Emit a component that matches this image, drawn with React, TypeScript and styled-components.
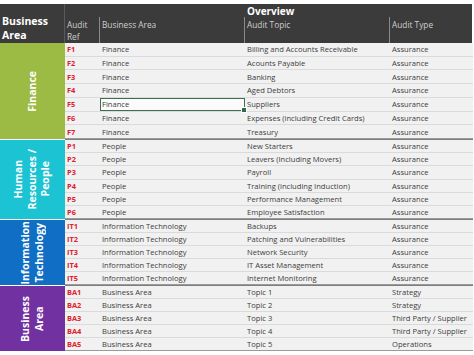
import React from "react";
import styled, { createGlobalStyle } from "styled-components";

const GlobalStyle = createGlobalStyle`
  html, body { margin: 0; padding: 0; background: #ffffff; }
  body { font-family: "Open Sans", "Noto Sans", sans-serif; }
  * { box-sizing: border-box; }
`;

const COLS = "35px 145px 145px 1fr";

const Page = styled.div`
  width: 474px;
  height: 355px;
  padding-top: 4px;
  overflow: hidden;
`;

const Sheet = styled.div`
  width: 473px;
  display: flex;
  flex-direction: column;
`;

const Header = styled.div`
  display: grid;
  grid-template-columns: 65px 1fr;
  height: 39px;
  background: #3b3b3b;
  margin-right: 1px;
`;

const CornerLabel = styled.div`
  border-right: 1px solid #5a5a5a;
  color: #ffffff;
  font-weight: 700;
  font-size: 10.5px;
  line-height: 14px;
  padding: 10px 0 0 2px;
`;

const HeaderRight = styled.div`
  display: grid;
  grid-template-rows: 13px 1fr;
`;

const TitleRow = styled.div`
  display: grid;
  grid-template-columns: ${COLS};
`;

const Title = styled.div`
  grid-column: 3;
  color: #ffffff;
  font-weight: 700;
  font-size: 10px;
  line-height: 13px;
  padding: 1px 0 0 2px;
`;

const LabelRow = styled.div`
  display: grid;
  grid-template-columns: ${COLS};
`;

const ColLabel = styled.div<{ $divider?: boolean }>`
  color: #cfcfcf;
  font-size: 8.3px;
  line-height: 12px;
  padding: 2px 0 0 2px;
  border-left: ${(p) => (p.$divider ? "1px solid #8a8a8a" : "none")};
  margin-left: ${(p) => (p.$divider ? "-1px" : "0")};
`;

const Group = styled.div<{ $h: number; $first?: boolean }>`
  display: grid;
  grid-template-columns: 65px 1fr;
  height: ${(p) => p.$h}px;
  border-top: ${(p) => (p.$first ? "none" : "1px solid #ffffff")};
`;

const Band = styled.div<{ $color: string }>`
  background: ${(p) => p.$color};
  display: flex;
  align-items: center;
  justify-content: center;
`;

const BandLabel = styled.div`
  writing-mode: vertical-rl;
  transform: rotate(180deg);
  color: #ffffff;
  font-weight: 700;
  font-size: 10.5px;
  line-height: 13.5px;
  text-align: center;
  white-space: pre-line;
`;

const Rows = styled.div<{ $first?: boolean }>`
  display: grid;
  grid-auto-rows: 1fr;
  border-top: ${(p) => (p.$first ? "none" : "1px solid #7f7f7f")};
  margin-top: ${(p) => (p.$first ? "0" : "-1px")};
`;

const Row = styled.div`
  display: grid;
  grid-template-columns: ${COLS};
  background: #f1f1f1;
  border-bottom: 1px solid #dadada;
  &:last-child {
    border-bottom: 1px solid #9a9a9a;
  }
`;

const Cell = styled.div<{ $selected?: boolean }>`
  position: relative;
  display: flex;
  align-items: center;
  color: #3c3c3c;
  font-size: 7.6px;
  padding-left: 2px;
  white-space: nowrap;
  border: ${(p) => (p.$selected ? "1px solid #3f6f4f" : "none")};
  ${(p) =>
    p.$selected
      ? `
    padding-left: 1px;
    background: #fbfbfb;
    &::after {
      content: "";
      position: absolute;
      right: -3px;
      bottom: -3px;
      width: 4px;
      height: 4px;
      background: #2f6b45;
      border: 1px solid #ffffff;
      z-index: 2;
    }
  `
      : ""}
`;

const Ref = styled(Cell)`
  color: #e0202a;
  font-weight: 700;
  font-size: 7.4px;
`;

type Item = [string, string, string, string];

const groups: {
  label: string;
  color: string;
  h: number;
  items: Item[];
}[] = [
  {
    label: "Finance",
    color: "#9bbb45",
    h: 96,
    items: [
      ["F1", "Finance", "Billing and Accounts Receivable", "Assurance"],
      ["F2", "Finance", "Acounts Payable", "Assurance"],
      ["F3", "Finance", "Banking", "Assurance"],
      ["F4", "Finance", "Aged Debtors", "Assurance"],
      ["F5", "Finance", "Suppliers", "Assurance"],
      ["F6", "Finance", "Expenses (including Credit Cards)", "Assurance"],
      ["F7", "Finance", "Treasury", "Assurance"],
    ],
  },
  {
    label: "Human\nResources /\nPeople",
    color: "#1cc3d3",
    h: 80,
    items: [
      ["P1", "People", "New Starters", "Assurance"],
      ["P2", "People", "Leavers (Including Movers)", "Assurance"],
      ["P3", "People", "Payroll", "Assurance"],
      ["P4", "People", "Training (including Induction)", "Assurance"],
      ["P5", "People", "Performance Management", "Assurance"],
      ["P6", "People", "Employee Satisfaction", "Assurance"],
    ],
  },
  {
    label: "Information\nTechnology",
    color: "#106ec5",
    h: 66,
    items: [
      ["IT1", "Information Technology", "Backups", "Assurance"],
      ["IT2", "Information Technology", "Patching and Vulnerabilities", "Assurance"],
      ["IT3", "Information Technology", "Network Security", "Assurance"],
      ["IT4", "Information Technology", "IT Asset Management", "Assurance"],
      ["IT5", "Information Technology", "Internet Monitoring", "Assurance"],
    ],
  },
  {
    label: "Business\nArea",
    color: "#7131a1",
    h: 66,
    items: [
      ["BA1", "Business Area", "Topic 1", "Strategy"],
      ["BA2", "Business Area", "Topic 2", "Strategy"],
      ["BA3", "Business Area", "Topic 3", "Third Party / Supplier"],
      ["BA4", "Business Area", "Topic 4", "Third Party / Supplier"],
      ["BA5", "Business Area", "Topic 5", "Operations"],
    ],
  },
];

export default function App() {
  return (
    <Page>
      <GlobalStyle />
      <Sheet>
        <Header>
          <CornerLabel>
            Business
            <br />
            Area
          </CornerLabel>
          <HeaderRight>
            <TitleRow>
              <Title>Overview</Title>
            </TitleRow>
            <LabelRow>
              <ColLabel>
                Audit
                <br />
                Ref
              </ColLabel>
              <ColLabel $divider>Business Area</ColLabel>
              <ColLabel $divider>Audit Topic</ColLabel>
              <ColLabel $divider>Audit Type</ColLabel>
            </LabelRow>
          </HeaderRight>
        </Header>
        {groups.map((g, gi) => (
          <Group key={g.label} $h={g.h} $first={gi === 0}>
            <Band $color={g.color}>
              <BandLabel>{g.label}</BandLabel>
            </Band>
            <Rows $first={gi === 0}>
              {g.items.map((it) => (
                <Row key={it[0]}>
                  <Ref>{it[0]}</Ref>
                  <Cell $selected={it[0] === "F5"}>{it[1]}</Cell>
                  <Cell>{it[2]}</Cell>
                  <Cell>{it[3]}</Cell>
                </Row>
              ))}
            </Rows>
          </Group>
        ))}
      </Sheet>
    </Page>
  );
}
